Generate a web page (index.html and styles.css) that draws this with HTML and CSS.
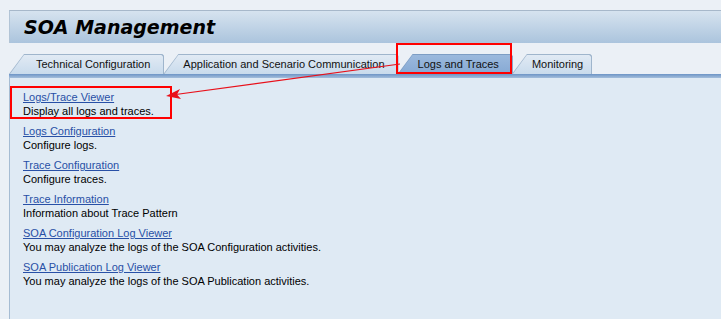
FILE: index.html
```html
<!DOCTYPE html>
<html lang="en">
<head>
    <meta charset="UTF-8">
    <title>SOA Management</title>
    <link rel="stylesheet" href="styles.css">
</head>
<body>
    <div class="page">
        <div class="header">
            <h1>SOA Management</h1>
        </div>

        <div class="tabs">
            <div class="tab first"><div class="tab-in">Technical Configuration</div></div>
            <div class="tab"><div class="tab-in">Application and Scenario Communication</div></div>
            <div class="tab active"><div class="tab-in">Logs and Traces</div></div>
            <div class="tab last"><div class="tab-in">Monitoring</div></div>
        </div>
        <div class="tabline"></div>

        <div class="panel">
            <div class="item">
                <a href="#">Logs/Trace Viewer</a>
                <div class="desc">Display all logs and traces.</div>
            </div>
            <div class="item">
                <a href="#">Logs Configuration</a>
                <div class="desc">Configure logs.</div>
            </div>
            <div class="item">
                <a href="#">Trace Configuration</a>
                <div class="desc">Configure traces.</div>
            </div>
            <div class="item">
                <a href="#">Trace Information</a>
                <div class="desc">Information about Trace Pattern</div>
            </div>
            <div class="item">
                <a href="#">SOA Configuration Log Viewer</a>
                <div class="desc">You may analyze the logs of the SOA Configuration activities.</div>
            </div>
            <div class="item">
                <a href="#">SOA Publication Log Viewer</a>
                <div class="desc">You may analyze the logs of the SOA Publication activities.</div>
            </div>
        </div>
    </div>

    <!-- screenshot annotations -->
    <svg class="marks" width="721" height="319" viewBox="0 0 721 319">
        <rect x="397" y="44" width="114" height="29" fill="none" stroke="#ff0000" stroke-width="2"/>
        <rect x="11" y="87" width="160" height="31" fill="none" stroke="#ff0000" stroke-width="2"/>
        <line x1="400" y1="64" x2="172" y2="95" stroke="#e8101a" stroke-width="1.2"/>
        <path d="M166 96 L180 89 L177 94.5 L181 99 Z" fill="#e8101a"/>
    </svg>
</body>
</html>
```

FILE: styles.css
```css
html, body {
    height: 100%;
}

body {
    margin: 0;
    background-color: #ebf0f6;
    font-family: "Liberation Sans", Arial, sans-serif;
    font-size: 11px;
    color: #000;
    overflow: hidden;
}

.page {
    display: flex;
    flex-direction: column;
    height: 100%;
    padding: 10px 0 0 9px;
    box-sizing: border-box;
}

.header {
    height: 32px;
    border-top: 1px solid #a7b8ca;
    border-left: 1px solid #b2c4d6;
    background: linear-gradient(#d6e3ef, #abc4dd);
    display: flex;
    align-items: center;
    padding-left: 14px;
}

.header h1 {
    margin: 0;
    font-family: "DejaVu Sans", Verdana, sans-serif;
    font-size: 19px;
    font-weight: bold;
    font-style: italic;
    color: #000;
}

.tabs {
    display: flex;
    margin-top: 11px;
    height: 20px;
    padding-left: 1px;
}

.tab {
    height: 20px;
    margin-left: -1px;
    background: #9fb5cc;
    clip-path: polygon(0 100%, 15px 0, calc(100% - 2px) 0, 100% 2px, 100% 100%);
}

.tab-in {
    height: 19px;
    margin: 1px 1px 0 1px;
    padding: 0 13px 0 19px;
    line-height: 19px;
    white-space: nowrap;
    color: #111;
    background: linear-gradient(#e1eaf4, #c9dbec);
    clip-path: polygon(0 100%, 14px 0, calc(100% - 2px) 0, 100% 2px, 100% 100%);
}

.tab.first .tab-in {
    padding-left: 26px;
}

.tab.last .tab-in {
    padding-right: 8px;
}

.tab.active {
    background: #7d9dc4;
}

.tab.active .tab-in {
    background: linear-gradient(#9bb9dd, #86a9d4);
}

.tabline {
    height: 4px;
    background: linear-gradient(#6d94c6, #a4bedc);
}

.panel {
    flex: 1;
    background-color: #dfeaf4;
    border-left: 1px solid #a6bcd3;
    padding: 12px 0 0 13px;
    display: flex;
    flex-direction: column;
    gap: 6px;
}

.item {
    line-height: 14px;
}

.item a {
    color: #2850a6;
    text-decoration: underline;
}

.marks {
    position: absolute;
    left: 0;
    top: 0;
    pointer-events: none;
}
```
